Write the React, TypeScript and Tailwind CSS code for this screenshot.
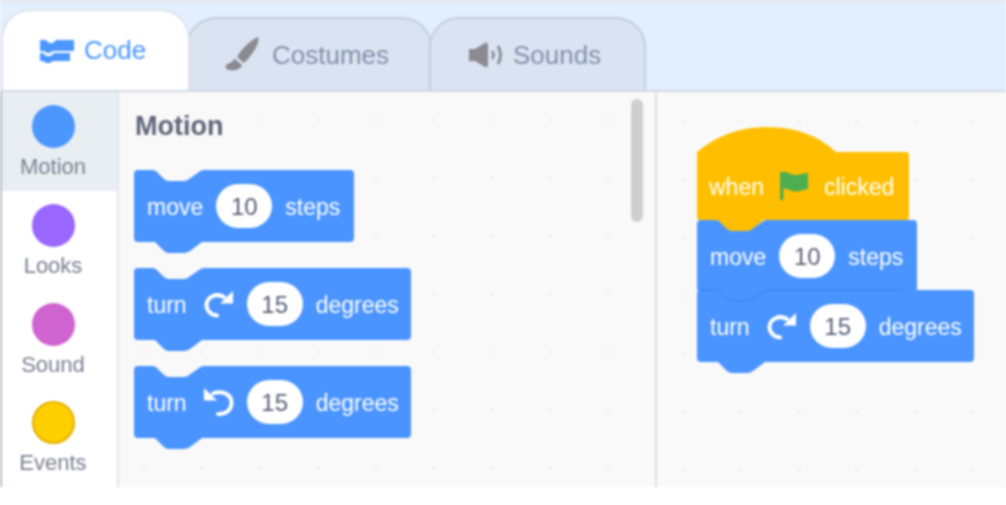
const font = "font-['Liberation_Sans',Arial,sans-serif]";

const categories = [
  { name: "Motion", dot: "bg-[#4c97ff]", active: true },
  { name: "Looks", dot: "bg-[#9966ff]" },
  { name: "Sound", dot: "bg-[#cf63cf]" },
  { name: "Events", dot: "bg-[#ffcf00] border-2 border-[#e6ac00]" },
];

// stack block outline: notch on top, bump underneath
function blockPath(w: number, h: number) {
  return `M4 0H19Q21 0 23 2L30 9Q32 11 35 11H50Q53 11 55 9L65 2Q67 0 70 0H${w - 4}Q${w} 0 ${w} 4V${h - 4}Q${w} ${h} ${w - 4} ${h}H68L56 ${h + 9}Q53 ${h + 11} 50 ${h + 11}H35Q32 ${h + 11} 30 ${h + 9}L21 ${h}H4Q0 ${h} 0 ${h - 4}V4Q0 0 4 0Z`;
}

function hatPath(w: number, h: number) {
  return `M0 25Q30 0 70 0Q112 0 139 25H${w - 3}Q${w} 25 ${w} 28V${h - 3}Q${w} ${h} ${w - 3} ${h}H66L56 ${h + 10}Q54 ${h + 12} 51 ${h + 12}H34Q31 ${h + 12} 29 ${h + 10}L20 ${h}H3Q0 ${h} 0 ${h - 3}Z`;
}

function TurnRight() {
  return (
    <svg width="30" height="28" viewBox="0 0 30 28" fill="none" className="ml-[4px] shrink-0">
      <path d="M20 7C12 2.5 3 7 2.5 14.5C2.2 20.5 7 25 13 25.5" stroke="white" strokeWidth="4" strokeLinecap="round" />
      <path d="M29 1V13.5H16Z" fill="white" />
    </svg>
  );
}

function TurnLeft() {
  return (
    <svg width="30" height="30" viewBox="0 0 30 30" fill="none" className="ml-[4px] shrink-0">
      <path d="M9 6.5C17 3.5 27 6.5 27.5 15C28 23 21 27.5 14 27" stroke="white" strokeWidth="4" strokeLinecap="round" />
      <path d="M0 1V13.5H13Z" fill="white" />
    </svg>
  );
}

function Flag() {
  return (
    <svg width="30" height="30" viewBox="0 0 30 30" className="shrink-0">
      <path d="M1 1H4.5V29H1Z" fill="#4cae50" />
      <path d="M3 1C9 -0.5 11 4.5 17 4C21 3.7 25 2 29 2V18C25 18 22 20.5 17 20.5C12 20.5 9 16.5 3 18Z" fill="#4cae50" />
    </svg>
  );
}

function Label({ children }: { children: React.ReactNode }) {
  return <span className="pt-[3px]">{children}</span>;
}

function Pill({ value }: { value: string }) {
  return (
    <span className="flex h-[44px] w-[56px] shrink-0 items-center justify-center rounded-[22px] bg-white pt-[2px] text-[24px] text-[#575e75]">
      {value}
    </span>
  );
}

function Block({
  w,
  className,
  seam,
  children,
}: {
  w: number;
  className: string;
  seam?: boolean;
  children: React.ReactNode;
}) {
  return (
    <div className={`relative flex h-[72px] items-center pl-[13px] text-[23px] text-white ${className}`}>
      <svg width={w} height="84" className="absolute left-0 top-0 overflow-visible">
        <path d={blockPath(w, 72)} fill="#4a94ff" />
        {/* darker edge where this block hangs under the one above */}
        {seam && (
          <path
            d={`M4 0H19Q21 0 23 2L30 9Q32 11 35 11H50Q53 11 55 9L65 2Q67 0 70 0H${w - 70}`}
            fill="none"
            stroke="#3f7fdd"
            strokeWidth="1"
          />
        )}
      </svg>
      <div className="relative flex items-center gap-[13px] whitespace-nowrap">{children}</div>
    </div>
  );
}

function MoveBlock({ className }: { className: string }) {
  return (
    <Block w={220} className={className}>
      <Label>move</Label>
      <Pill value="10" />
      <Label>steps</Label>
    </Block>
  );
}

function TurnBlock({
  left,
  className,
  seam,
}: {
  left?: boolean;
  className: string;
  seam?: boolean;
}) {
  return (
    <Block w={277} className={className} seam={seam}>
      <Label>turn</Label>
      {left ? <TurnLeft /> : <TurnRight />}
      <Pill value="15" />
      <Label>degrees</Label>
    </Block>
  );
}

function Tab({
  label,
  className,
  textClass,
  children,
}: {
  label: string;
  className: string;
  textClass: string;
  children: React.ReactNode;
}) {
  return (
    <div className={`relative flex items-center rounded-t-[30px] border-2 border-b-0 ${className}`}>
      {children}
      <span className={`text-[26px] ${textClass}`}>{label}</span>
    </div>
  );
}

export default function App() {
  return (
    <div className={`flex h-[505px] w-[1006px] flex-col overflow-hidden bg-white blur-[1px] ${font}`}>
      {/* Tab strip */}
      <div className="flex h-[92px] shrink-0 items-end border-y-2 border-t-[#dcdfe4] border-b-[#d3d9e4] bg-[#e3effe] pl-[1px]">
        <Tab
          label="Code"
          className="z-10 h-[81px] w-[189px] border-[#dfe3ea] bg-white pl-[36px]"
          textClass="text-[#4c97ff] pl-[9px]"
        >
          <svg width="36" height="26" viewBox="0 0 36 26" className="shrink-0">
            <path d="M1 2H7L10 5H14L17 2H35V13H14L11 15H8L5 13H1Z" fill="#4c97ff" />
            <path d="M1 15H4L7 18H12L15 15H31V23H14L11 25H7L4 23H1Z" fill="#4c97ff" />
          </svg>
        </Tab>
        <Tab
          label="Costumes"
          className="-ml-[4px] h-[73px] w-[246px] border-[#c4cddc] bg-[#d9e3f2] pl-[37px]"
          textClass="text-[#8690a6] pl-[11px] pt-[2px]"
        >
          <svg width="36" height="36" viewBox="0 0 36 36" className="shrink-0">
            <path d="M33 0C35 3 31 12 26 18C24 21 21 24 19 26L12 20C16 13 24 4 33 0Z" fill="#8b8a90" />
            <path d="M10 22L17 28C16 32 10 34 4 33C0 32 0 29 2 27C5 27 7 24 10 22Z" fill="#8b8a90" />
          </svg>
        </Tab>
        <Tab
          label="Sounds"
          className="-ml-[3px] h-[73px] w-[217px] border-[#c4cddc] bg-[#d9e3f2] pl-[37px]"
          textClass="text-[#8690a6] pl-[9px] pt-[2px]"
        >
          <svg width="36" height="28" viewBox="0 0 36 28" className="shrink-0">
            <path d="M1 8H7L17 2Q20 1 20 4V24Q20 27 17 26L7 20H1Z" fill="#8b8a90" />
            <path d="M24 10Q27 14 24 18" stroke="#8b8a90" strokeWidth="2.6" fill="none" />
            <path d="M30 5Q35 14 30 23" stroke="#8b8a90" strokeWidth="2.8" fill="none" />
          </svg>
        </Tab>
      </div>

      <div className="flex h-[395px] shrink-0">
        {/* Category rail */}
        <div className="flex w-[119px] shrink-0 flex-col border-x-2 border-l-[#b9bdc9] border-r-[#e3e4ea] bg-white">
          {categories.map((c) => (
            <div
              key={c.name}
              className={`flex h-[99px] flex-col items-center pr-[13px] pt-[13px] ${c.active ? "bg-[#e9eef2]" : ""}`}
            >
              <span className={`h-[43px] w-[43px] rounded-full ${c.dot}`} />
              <span className="mt-[7px] text-[22px] leading-[24px] text-[#7b8092]">{c.name}</span>
            </div>
          ))}
        </div>

        {/* Block palette */}
        <div className="relative flex w-[538px] shrink-0 flex-col border-r-2 border-r-[#dddddd] bg-[#f9f9f9] bg-[radial-gradient(circle,#e9e9e9_1.5px,transparent_1.6px)] bg-[length:58px_58px] bg-[position:-4px_-1px] pl-[15px] pt-[19px]">
          <h2 className="pl-[1px] text-[27px] font-bold leading-[30px] text-[#5f6579]">Motion</h2>
          <div className="mt-[29px] flex flex-col gap-[26px]">
            <MoveBlock className="w-[220px]" />
            <TurnBlock className="w-[277px]" />
            <TurnBlock left className="w-[277px]" />
          </div>
          <div className="absolute left-[512px] top-[7px] h-[123px] w-[12px] rounded-full bg-[#cfcfcf]" />
        </div>

        {/* Script workspace */}
        <div className="flex flex-1 flex-col bg-[#f9f9f9] bg-[radial-gradient(circle,#e9e9e9_1.5px,transparent_1.6px)] bg-[length:58px_58px] bg-[position:-3px_1px] pl-[40px] pt-[35px]">
          <div className="relative flex h-[93px] w-[212px] items-center pl-[12px] pt-[25px] text-[23px] text-white">
            <svg width="212" height="106" className="absolute left-0 top-0 overflow-visible">
              <path d={hatPath(212, 93)} fill="#ffbf00" />
            </svg>
            <div className="relative flex items-center gap-[15px] whitespace-nowrap">
              <Label>when</Label>
              <Flag />
              <Label>clicked</Label>
            </div>
          </div>
          <MoveBlock className="w-[220px]" />
          <TurnBlock seam className="-mt-[2px] w-[277px]" />
        </div>
      </div>
    </div>
  );
}
